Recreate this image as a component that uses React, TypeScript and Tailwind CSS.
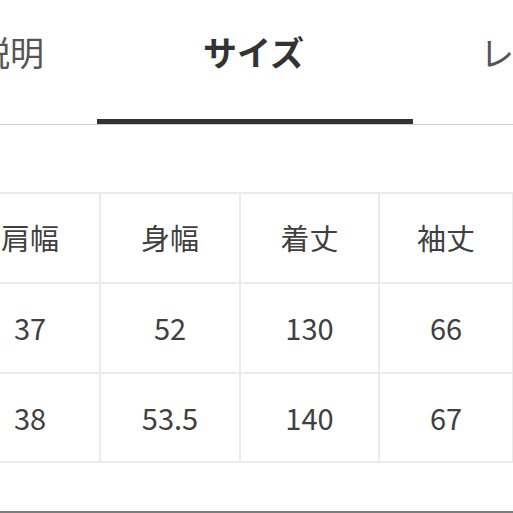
import React from "react";

const font = { fontFamily: '"Noto Sans CJK JP", "Noto Sans", sans-serif' };

const header = ["肩幅", "身幅", "着丈", "袖丈", "裄丈"];
const rows = [
  ["37", "52", "130", "66", "78"],
  ["38", "53.5", "140", "67", "79"],
];

export default function App() {
  return (
    <div
      className="w-[513px] h-[513px] bg-white overflow-hidden flex flex-col"
      style={font}
    >
      <div className="h-[119px] pt-[35px] flex flex-row whitespace-nowrap text-[34px] leading-[34px]">
        <div className="shrink-0 w-[136px] ml-[-92px] text-[#555]">商品説明</div>
        <div className="shrink-0 ml-[159px] font-bold text-[#333]">サイズ</div>
        <div className="shrink-0 ml-[176px] text-[#555]">レビュー</div>
      </div>
      <div className="h-[5px] w-[316px] ml-[97px] bg-[#333]" />
      <div className="h-px bg-[#cfcfcf]" />
      <div className="mt-[67px] ml-[-41px] w-[700px]">
        <div className="inline-grid grid-cols-[138px_138px_137px_132px_138px] grid-rows-[88px_88px_87px] gap-[2px] p-[2px] bg-[#ebebeb] text-[29px] text-[#404040]">
          {header.map((h) => (
            <div key={h} className="bg-white flex items-center justify-center">
              {h}
            </div>
          ))}
          {rows.map((r, i) =>
            r.map((v, j) => (
              <div
                key={`${i}-${j}`}
                className="bg-white flex items-center justify-center"
              >
                {v}
              </div>
            ))
          )}
        </div>
      </div>
      <div className="flex-1" />
      <div className="h-[2px] bg-[#7d7d7d]" />
    </div>
  );
}
